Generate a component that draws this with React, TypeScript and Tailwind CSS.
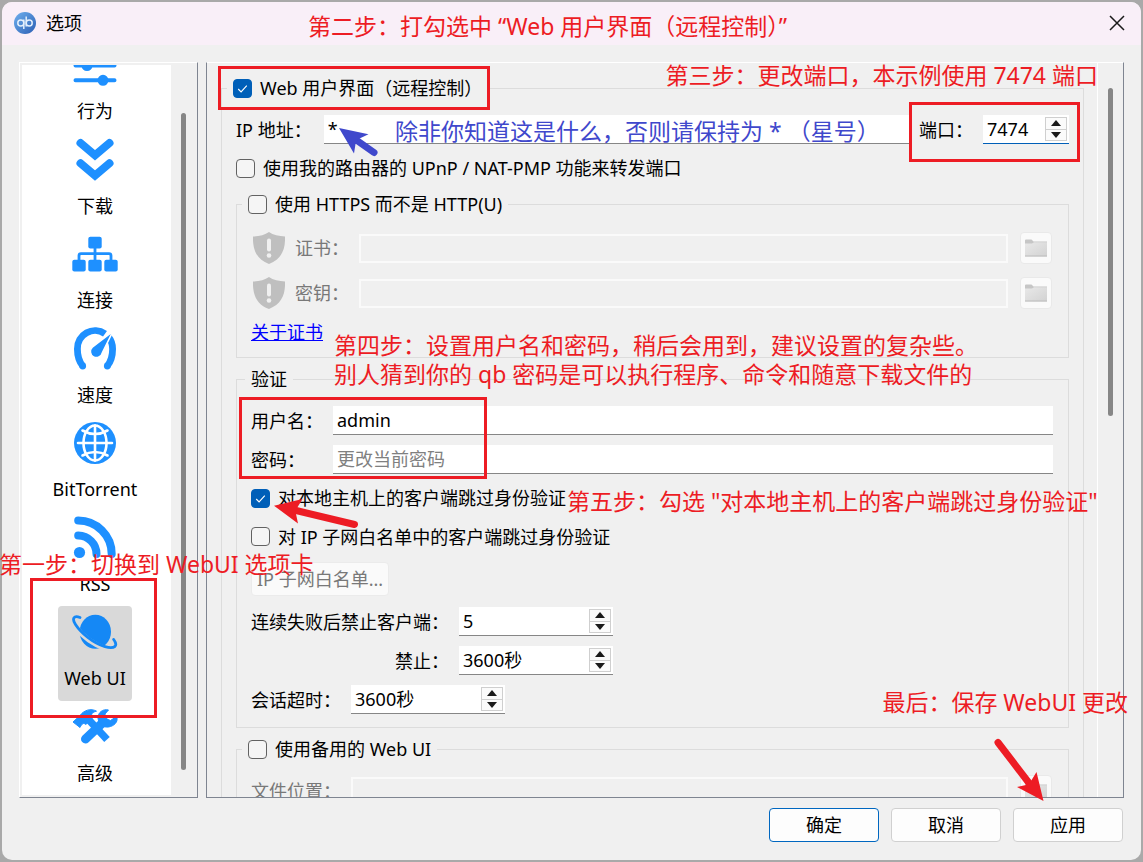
import type { ReactNode } from "react";

const SlidersIcon = () => (
  <g stroke="#1e90ff" strokeWidth="4" strokeLinecap="round" fill="#1e90ff">
    <path d="M4.500 10H43.500M4.500 24.500H43.500M4.500 39.300H43.500" />
    <circle cx="32" cy="10" r="3.500" />
    <circle cx="16" cy="24.500" r="3.500" />
    <circle cx="32" cy="39.300" r="3.500" />
  </g>
);

const DownloadsIcon = () => (
  <g stroke="#1e90ff" strokeWidth="8" strokeLinecap="round" fill="none">
    <path d="M9.500 7L24 19.300L38.500 7" />
    <path d="M9.500 27.300L24 39.600L38.500 27.300" />
  </g>
);

const NetworkIcon = () => (
  <g fill="#1e90ff">
    <rect x="17.300" y="6.700" width="13.400" height="11.700" rx="2" />
    <rect x="1.300" y="29.700" width="13.400" height="11.700" rx="2" />
    <rect x="17.300" y="29.700" width="13.400" height="11.700" rx="2" />
    <rect x="33.300" y="29.700" width="13.400" height="11.700" rx="2" />
    <path
      d="M24 17V31M8 31V25.700A2 2 0 0 1 10 23.700H38A2 2 0 0 1 40 25.700V31"
      fill="none"
      stroke="#1e90ff"
      strokeWidth="2.800"
    />
  </g>
);

const SpeedIcon = () => (
  <g>
    <g fill="none" stroke="#1e90ff" strokeWidth="6.800">
      <path d="M11.700 41C8.500 37 6.400 31 6.400 24A17.600 18 0 0 1 34 8.800" />
      <path d="M37.500 12Q41.600 17 41.600 24C41.600 31 39.500 37 36.300 41" />
    </g>
    <circle cx="11.700" cy="41" r="3.400" fill="#1e90ff" />
    <circle cx="36.300" cy="41" r="3.400" fill="#1e90ff" />
    <path
      d="M41.900 6.300L31.300 27.800A6 6 0 1 1 21.300 22.200Z"
      fill="#1e90ff"
      stroke="#fff"
      strokeWidth="1.500"
      strokeLinejoin="round"
    />
  </g>
);

const GlobeIcon = () => (
  <g>
    <circle cx="24" cy="24" r="21" fill="#1e90ff" />
    <g fill="none" stroke="#fff" strokeWidth="2.600" strokeLinecap="round">
      <path d="M24 6.500V41.500M7 24H41" />
      <ellipse cx="24" cy="24" rx="11.500" ry="17.500" />
      <path d="M11.500 11.500Q24 18.500 36.500 11.500M11.500 36.500Q24 29.500 36.500 36.500" />
    </g>
  </g>
);

const RssIcon = () => (
  <g>
    <circle cx="8.500" cy="38.500" r="5.600" fill="#1e90ff" />
    <g fill="none" stroke="#1e90ff" strokeWidth="8" strokeLinecap="round">
      <path d="M7.200 21.500A18.500 18.500 0 0 1 25.500 40" />
      <path d="M7.200 6.500A33.500 33.500 0 0 1 40.700 40" />
    </g>
  </g>
);

const PlanetIcon = () => (
  <g fill="none" strokeLinecap="round">
    <ellipse cx="24.300" cy="23.800" rx="15.700" ry="17" fill="#1588f5" />
    <path d="M5 19.500C12 29 23 36.500 35 41" stroke="#d9d9d9" strokeWidth="5" />
    <path
      d="M9 9.500C3 7 .500 10.500 4.500 16.500C10 25 22 35 34 38.700C43.500 41.500 47.500 38 42.700 31.500"
      stroke="#1588f5"
      strokeWidth="2.800"
    />
  </g>
);

const ToolsIcon = () => (
  <g>
    <path
      d="M2 19L9 12.500C13 7 20 5 25.500 8.200C21.500 9 19.500 11 21 15.500L15 21.500C12.500 19.500 11 20.500 9 24.500Z"
      fill="#1e90ff"
      stroke="#1e90ff"
      strokeLinejoin="round"
    />
    <path d="M17.500 16.500L36 36.500" stroke="#1e90ff" strokeWidth="7.500" />
    <path d="M33 18.500L14.500 36" stroke="#1e90ff" strokeWidth="9" strokeLinecap="round" />
    <path
      d="M37.500 7C32 5.500 26.500 9.500 27 15.500C28 22.500 34 25.500 39.500 23.500C44.500 22 47.500 17.500 45.500 13.500L39.500 17.500L34.500 15.500L34 11Z"
      fill="#1e90ff"
      stroke="#1e90ff"
      strokeLinejoin="round"
    />
  </g>
);

const TABS: { label: string; icon: ReactNode; selected?: boolean }[] = [
  { label: "行为", icon: <SlidersIcon /> },
  { label: "下载", icon: <DownloadsIcon /> },
  { label: "连接", icon: <NetworkIcon /> },
  { label: "速度", icon: <SpeedIcon /> },
  { label: "BitTorrent", icon: <GlobeIcon /> },
  { label: "RSS", icon: <RssIcon /> },
  { label: "Web UI", icon: <PlanetIcon />, selected: true },
  { label: "高级", icon: <ToolsIcon /> },
];

function Check({ label, checked = false }: { label: string; checked?: boolean }) {
  return (
    <label className="flex h-6 items-center gap-2 whitespace-nowrap">
      <span className="relative flex size-[19px] shrink-0">
        <input
          type="checkbox"
          defaultChecked={checked}
          className="peer size-[19px] appearance-none rounded border border-[#626262] bg-[#f5f5f5] checked:border-[#005fb8] checked:bg-[#005fb8]"
        />
        <svg
          viewBox="0 0 20 20"
          className="pointer-events-none absolute inset-0 hidden size-[19px] peer-checked:block"
          aria-hidden="true"
        >
          <path d="M5.500 10.500L8.500 13.500L14.500 7" fill="none" stroke="#fff" strokeWidth="1.200" />
        </svg>
      </span>
      {label}
    </label>
  );
}

function Group({ legend, plain = false, children }: { legend: ReactNode; plain?: boolean; children: ReactNode }) {
  return (
    <fieldset className="min-w-0 border border-[#dcdcdc]">
      <legend className={plain ? "ml-2 h-6 px-1.5 leading-6" : "ml-[5px] h-6 px-1.5"}>{legend}</legend>
      {children}
    </fieldset>
  );
}

function Spin({ id, value, focused = false }: { id: string; value: string; focused?: boolean }) {
  return (
    <div
      className={
        focused
          ? "flex h-[29px] w-[86px] border-b border-[#005fb8] bg-white"
          : "flex h-[29px] w-[154px] border-b border-[#868686] bg-white"
      }
    >
      <input id={id} defaultValue={value} className="w-full min-w-0 flex-1 bg-transparent pl-1 outline-none" />
      <div className="my-0.5 mr-0.5 flex w-[22px] shrink-0 flex-col border border-[#cfcfcf] bg-[#fbfbfb]">
        <button type="button" aria-label="增加" className="flex flex-1 items-center justify-center border-b border-[#cfcfcf]">
          <svg width="10" height="6" viewBox="0 0 10 6" aria-hidden="true">
            <path d="M5 0L10 6H0Z" fill="#1a1a1a" />
          </svg>
        </button>
        <button type="button" aria-label="减少" className="flex flex-1 items-center justify-center">
          <svg width="10" height="6" viewBox="0 0 10 6" aria-hidden="true">
            <path d="M0 0H10L5 6Z" fill="#1a1a1a" />
          </svg>
        </button>
      </div>
    </div>
  );
}

function FolderButton({ label }: { label: string }) {
  return (
    <button
      type="button"
      disabled
      aria-label={label}
      className="flex size-8 shrink-0 items-center justify-center rounded border border-[#e9e9e9] bg-[#fafafa]"
    >
      <svg width="22" height="18" viewBox="0 0 22 18" aria-hidden="true">
        <defs>
          <linearGradient id="folder" x1="0" y1="0" x2="1" y2="1">
            <stop offset="0" stopColor="#e9e9e9" />
            <stop offset="1" stopColor="#d2d2d2" />
          </linearGradient>
        </defs>
        <path d="M0 1.500Q0 .500 1 .500H6.500L8.500 2.500H22V5H0Z" fill="#c6c6c6" />
        <path d="M0 4.500H7L9 3.200H22V17.500H0Z" fill="url(#folder)" />
        <path d="M0 17H22" stroke="#bdbdbd" />
      </svg>
    </button>
  );
}

function FileRow({ id, label }: { id: string; label: string }) {
  return (
    <div className="flex h-8 items-center">
      <svg width="32" height="32" viewBox="0 0 32 32" className="mx-0.5 shrink-0" aria-hidden="true">
        <path d="M16 0C20 3 26 4.200 32 4.500C32.500 17 29 27 16 32C3 27-.500 17 0 4.500C6 4.200 12 3 16 0Z" fill="#bfbfbf" />
        <path d="M16 8.500V17.500" stroke="#f0f0f0" strokeWidth="4" strokeLinecap="round" />
        <circle cx="16" cy="23.500" r="2.300" fill="#f0f0f0" />
      </svg>
      <label htmlFor={id} className="mr-2.5 ml-2 whitespace-nowrap text-[#787878]">
        {label}
      </label>
      <input id={id} disabled className="mr-3 h-[29px] min-w-0 flex-1 border-2 border-[#fafafa] bg-[#f0f0f0]" />
      <FolderButton label={`浏览${label}`} />
    </div>
  );
}

const FIELD = "h-[29px] min-w-0 flex-1 border-b border-[#868686] bg-white pl-1 outline-none placeholder:text-[#808080]";
const NOTE = "absolute whitespace-nowrap text-[23px] leading-[29px]";
const FRAME = "absolute border-3 border-[#ed1c24]";
const DIALOG_BUTTON = "h-[34px] w-[110px] rounded border bg-[#fdfdfd]";

function WebUiPage() {
  return (
    <Group legend={<Check label="Web 用户界面（远程控制）" checked />}>
      <div className="px-3.5 pt-[15px] pb-4">
        <div className="flex flex-col gap-3 pb-3">
          <div className="flex items-center">
            <label htmlFor="address" className="mr-3 whitespace-nowrap">
              IP 地址：
            </label>
            <input id="address" defaultValue="*" className={FIELD} />
            <label htmlFor="port" className="mr-2.5 ml-2.5 whitespace-nowrap">
              端口：
            </label>
            <Spin id="port" value="7474" focused />
          </div>
          <Check label="使用我的路由器的 UPnP / NAT-PMP 功能来转发端口" />
        </div>
        <div className="flex flex-col gap-[9px]">
          <Group legend={<Check label="使用 HTTPS 而不是 HTTP(U)" />}>
            <div className="flex flex-col gap-[13px] pt-4 pr-4 pb-[15px] pl-3.5">
              <FileRow id="certificate" label="证书：" />
              <FileRow id="key" label="密钥：" />
              <a href="#certificates" className="self-start leading-5 text-[#0000ff] underline">
                关于证书
              </a>
            </div>
          </Group>
          <Group legend="验证" plain>
            <div className="flex flex-col gap-2.5 pt-[15px] pr-[15px] pb-[13px] pl-3.5">
              <div className="flex items-center gap-2.5">
                <label htmlFor="username" className="w-[72px] whitespace-nowrap">
                  用户名：
                </label>
                <input id="username" defaultValue="admin" className={FIELD} />
              </div>
              <div className="flex items-center gap-2.5">
                <label htmlFor="password" className="w-[72px] whitespace-nowrap">
                  密码：
                </label>
                <input id="password" type="password" placeholder="更改当前密码" className={FIELD} />
              </div>
              <div className="flex h-7 items-center">
                <Check label="对本地主机上的客户端跳过身份验证" checked />
              </div>
              <div className="flex h-[29px] items-center">
                <Check label="对 IP 子网白名单中的客户端跳过身份验证" />
              </div>
              <div className="flex h-9 items-center">
                <button
                  type="button"
                  disabled
                  className="h-[34px] rounded border border-[#ebebeb] bg-[#fafafa] px-[5px] text-[#787878]"
                >
                  IP 子网白名单...
                </button>
              </div>
              <div className="grid grid-cols-[auto_1fr] items-center gap-2.5">
                <label htmlFor="failures" className="text-right whitespace-nowrap">
                  连续失败后禁止客户端：
                </label>
                <Spin id="failures" value="5" />
                <label htmlFor="ban" className="text-right whitespace-nowrap">
                  禁止：
                </label>
                <Spin id="ban" value="3600秒" />
              </div>
              <div className="flex items-center gap-2.5">
                <label htmlFor="timeout" className="whitespace-nowrap">
                  会话超时：
                </label>
                <Spin id="timeout" value="3600秒" />
              </div>
            </div>
          </Group>
          <Group legend={<Check label="使用备用的 Web UI" />}>
            <div className="flex items-center pt-3.5 pr-4 pb-4 pl-3.5">
              <label htmlFor="location" className="mr-2.5 whitespace-nowrap text-[#787878]">
                文件位置：
              </label>
              <input id="location" disabled className="mr-3 h-[29px] min-w-0 flex-1 border-2 border-[#fafafa] bg-[#f0f0f0]" />
              <FolderButton label="浏览文件位置" />
            </div>
          </Group>
        </div>
      </div>
    </Group>
  );
}

function Annotations() {
  return (
    <div className="pointer-events-none absolute inset-0 overflow-hidden text-[#ed1c24]">
      <div className={`${FRAME} top-[66px] left-[218px] h-11 w-[272px]`} />
      <div className={`${FRAME} top-[102px] right-[63px] h-[60px] w-[171px]`} />
      <div className={`${FRAME} top-[397px] left-[239px] h-[82px] w-[248px]`} />
      <div className={`${FRAME} top-[578px] left-[30px] h-[140px] w-[127px]`} />

      <p className={`${NOTE} top-3 left-[308px]`}>第二步：打勾选中 “Web 用户界面（远程控制）”</p>
      <p className={`${NOTE} top-[61px] right-[45px]`}>第三步：更改端口，本示例使用 7474 端口</p>
      <p className={`${NOTE} top-[117px] left-[395px] text-[#3f48cc]`}>除非你知道这是什么，否则请保持为 * （星号）</p>
      <p className={`${NOTE} top-[331px] left-[334px]`}>
        第四步：设置用户名和密码，稍后会用到，建议设置的复杂些。
        <br />
        别人猜到你的 qb 密码是可以执行程序、命令和随意下载文件的
      </p>
      <p className={`${NOTE} top-[487px] left-[567px]`}>第五步：勾选 "对本地主机上的客户端跳过身份验证"</p>
      <p className={`${NOTE} top-[550px] -left-px`}>第一步：切换到 WebUI 选项卡</p>
      <p className={`${NOTE} top-[688px] right-[15px]`}>最后：保存 WebUI 更改</p>

      <svg className="absolute top-[124px] left-[336px]" width="46" height="36" viewBox="336 124 46 36" aria-hidden="true">
        <path d="M352 137L374 152.500" stroke="#3f48cc" strokeWidth="7" strokeLinecap="round" />
        <path d="M339 128L368.500 134.300L358.500 139L355.500 144L354 153.500Z" fill="#3f48cc" />
      </svg>
      <svg className="absolute top-[494px] left-[270px]" width="92" height="36" viewBox="270 494 92 36" aria-hidden="true">
        <path d="M292 509.500L354.500 524.500" stroke="#ed1c24" strokeWidth="7" strokeLinecap="round" />
        <path d="M274 505.700L302.500 499L297 508L296 514L298 523.500Z" fill="#ed1c24" />
      </svg>
      <svg className="absolute top-[736px] right-[95px]" width="56" height="70" viewBox="992 736 56 70" aria-hidden="true">
        <path d="M998 742.500L1029 783" stroke="#ed1c24" strokeWidth="7" strokeLinecap="round" />
        <path d="M1043.500 801L1036.500 772L1031 781L1026 785L1017 787Z" fill="#ed1c24" />
      </svg>
    </div>
  );
}

export default function App() {
  return (
    <div className="relative h-screen min-h-[480px] bg-[#a9a9a9] p-0.5 font-['Noto_Sans','Noto_Sans_CJK_SC',sans-serif] text-[18px] leading-6 text-black">
      <main className="flex h-full flex-col overflow-hidden rounded-[10px] bg-[#f0f0f0]">
        <header className="flex h-[43px] shrink-0 items-center bg-[#f9eff8] pr-4 pb-0.5 pl-3">
          <svg width="22" height="22" viewBox="0 0 22 22" aria-hidden="true">
            <defs>
              <linearGradient id="logo" x1="0" y1="0" x2="1" y2="1">
                <stop offset="0" stopColor="#6fb0ee" />
                <stop offset="1" stopColor="#2b5fb4" />
              </linearGradient>
            </defs>
            <circle cx="11" cy="11" r="11" fill="url(#logo)" />
            <g fill="none" stroke="#e4f0fc" strokeWidth="1.500">
              <circle cx="6.800" cy="11" r="3" />
              <path d="M9.800 7.500V17" />
              <circle cx="15.200" cy="11" r="3" />
              <path d="M12.200 4.500V14.500" />
            </g>
          </svg>
          <h1 className="ml-2.5 flex-1">选项</h1>
          <button type="button" aria-label="关闭" className="flex size-4 items-center justify-center">
            <svg width="16" height="16" viewBox="0 0 16 16" aria-hidden="true">
              <path d="M1 1L15 15M15 1L1 15" stroke="#1a1a1a" strokeWidth="1.500" />
            </svg>
          </button>
        </header>

        <div className="flex min-h-0 flex-1 gap-2 px-[17px] pt-[17px]">
          <nav className="flex w-[179px] shrink-0 border border-t-white border-r-[#7f8591] border-b-[#7f8591] border-l-white p-0.5">
            <div className="flex w-[149px] flex-col overflow-hidden bg-white">
              <ul className="-mt-[26px] flex flex-1 flex-col items-center pr-[3px]">
                {TABS.map((tab) => (
                  <li key={tab.label} className="flex flex-1">
                    <button
                      type="button"
                      className={
                        tab.selected
                          ? "flex flex-col items-center rounded-sm bg-[#d9d9d9] px-1.5 pt-0.5 whitespace-nowrap"
                          : "flex flex-col items-center px-1.5 pt-0.5 whitespace-nowrap"
                      }
                    >
                      <svg width="48" height="48" viewBox="0 0 48 48" className="mb-2.5" aria-hidden="true">
                        {tab.icon}
                      </svg>
                      {tab.label}
                    </button>
                  </li>
                ))}
              </ul>
            </div>
            <div className="mt-12 mb-[25px] ml-2.5 w-[5px] rounded-full bg-[#868686]" />
          </nav>

          <section className="flex min-w-0 flex-1 overflow-hidden border border-t-white border-r-[#7f8591] border-b-[#7f8591] border-l-[#7f8591]">
            <div className="min-w-0 flex-1 overflow-hidden border-r border-white pt-[13px] pr-[13px] pl-3.5">
              <WebUiPage />
            </div>
            <div className="mt-[25px] mr-2.5 ml-2.5 h-[328px] w-[5px] rounded-full bg-[#868686]" />
          </section>
        </div>

        <footer className="flex shrink-0 justify-end gap-3 px-[18px] pt-2.5 pb-[18px]">
          <button type="button" className={`${DIALOG_BUTTON} border-[#0067c0]`}>
            确定
          </button>
          <button type="button" className={`${DIALOG_BUTTON} border-[#d0d0d0]`}>
            取消
          </button>
          <button type="button" className={`${DIALOG_BUTTON} border-[#d0d0d0]`}>
            应用
          </button>
        </footer>
      </main>
      <Annotations />
    </div>
  );
}
